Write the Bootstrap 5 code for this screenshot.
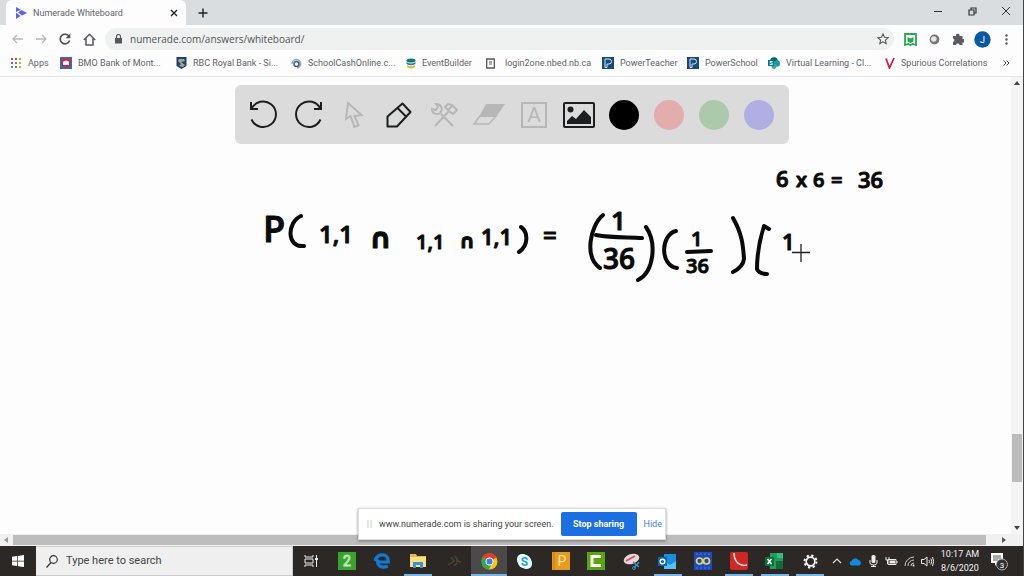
<!DOCTYPE html>
<html lang="en">
<head>
<meta charset="utf-8">
<meta name="viewport" content="width=device-width, initial-scale=1">
<title>Numerade Whiteboard</title>
<link rel="stylesheet" href="https://cdn.jsdelivr.net/npm/bootstrap@5.3.0/dist/css/bootstrap.min.css">
<style>
  body { font-family: Roboto, "Open Sans", sans-serif; font-size: 9px; line-height: 12px; background: #fdfdfd; color: #5f6368; }
  button { font: inherit; color: inherit; background: none; border: 0; padding: 0; }
  button, a { display: inline-flex; align-items: center; justify-content: center; flex-shrink: 0; }
  svg { display: block; flex-shrink: 0; }
  .window-edge { border-right: 1px solid #444; }

  .tab-strip { height: 25px; background: #dadde0; padding-left: 6px; }
  .browser-tab { width: 180px; background: #fdfdfd; border-radius: 6px 6px 0 0; padding: 0 8px 0 9px; gap: 6px; }
  .window-buttons button { width: 34px; height: 22px; color: #333; }

  .address-row { height: 28px; padding: 0 5px; }
  .address-row .nav-btn { width: 24px; height: 24px; }
  .omnibox { height: 22px; border-radius: 11px; background: #eff1f1; margin-left: 4px; padding: 0 5px 0 10px; gap: 8px; }
  .omnibox input { border: 0; background: none; outline: 0; padding: 0; font-family: "Open Sans", sans-serif; font-size: 10px; line-height: 16px; color: #4f5357; min-width: 0; }

  .bookmarks { height: 24px; border-bottom: 1px solid #e4e5e6; padding: 0 13px 3px 10px; }
  .bookmark-grid { display: grid; grid-template-columns: 50px 116px 115px 115px 80px 116px 85px 81px 117px 110px; }
  .bookmark-grid a { justify-content: flex-start; gap: 6px; color: #5f6368; text-decoration: none; white-space: nowrap; }

  .whiteboard { background: #fdfdfd; }
  .ink-layer { width: 100%; }
  .ink-layer text { font-family: "Open Sans", sans-serif; font-weight: 600; fill: #0a0a0a; stroke: #0a0a0a; stroke-width: 1; stroke-linejoin: round; }
  .ink-layer .cap-sign { font-family: "DejaVu Sans", sans-serif; font-weight: 700; }
  .tools-wrap { inset: 8px 0 auto 12px; }
  .tools { background: #dbdbdb; border-radius: 6px; height: 59px; padding: 0 7px; }
  .tools button { width: 45px; height: 45px; color: #1c1e1f; }
  .tools button:disabled { color: #b7b7b7; }
  .swatch { width: 30px; height: 30px; border-radius: 50%; }

  .v-scroll { width: 12px; background: #f4f4f4; color: #444; }
  .v-scroll .thumb { height: 48px; width: 10px; background: #bcbcbc; margin-bottom: 44px; }
  .h-scroll { height: 12px; background: #f1f1f1; color: #555; padding: 0 17px 0 4px; }
  .h-scroll .thumb { height: 10px; background: #bdbdbd; margin: 0 16px 0 4px; }

  .share-bar { left: 50%; bottom: 36px; width: 308px; height: 32px; margin-left: -154px; background: #fff; border: 1px solid #ddd; box-shadow: 0 1px 3px #0006; color: #444; padding: 0 7px 0 8px; gap: 7px; }
  .share-bar .stop { width: 76px; height: 24px; background: #1b6fe0; color: #fff; font-weight: 700; border-radius: 2px; }
  .share-bar a { color: #3b7fe0; text-decoration: none; }

  .taskbar-row { height: 30px; background: #2c2826; color: #f0f0f0; }
  .start { width: 36px; }
  .search-box { width: 257px; background: #efefef; color: #444; padding: 0 10px; gap: 8px; border: 1px solid #ccc; border-left: 0; }
  .search-box input { border: 0; background: none; outline: 0; padding: 0; font-size: 11px; color: #444; min-width: 0; }
  .search-box input::placeholder { color: #444; opacity: 1; }
  .apps button { flex: 1 1 0; }
  .apps .running { background: linear-gradient(#79b4e2, #79b4e2) bottom / 28px 2px no-repeat; }
  .apps .current { background-color: #4b4a49; background-size: 100% 2px; }
  .tray { padding-right: 9px; }
  .tray button { width: 18px; }
  .tray .clock { width: 48px; line-height: 14px; text-align: center; color: #f2f2f2; }
  .tray .notice { width: 30px; }
</style>
</head>
<body class="window-edge vh-100 d-flex flex-column overflow-hidden">

<header class="flex-shrink-0">
  <div class="tab-strip d-flex">
    <div class="browser-tab d-flex align-items-center">
      <svg width="12" height="12" viewBox="0 0 12 12" fill="#5b62ef"><path d="M1 0l5 2.800L1 5zM6.500 3L12 6 7 8.500 3 5.500zM1 5.500L5.500 9 1 12z"/></svg>
      <span class="flex-grow-1 text-nowrap">Numerade Whiteboard</span>
      <button type="button" aria-label="Close tab"><svg width="8" height="8" viewBox="0 0 8 8" stroke="#222" stroke-width="1.400"><path d="M1 1l6 6M7 1L1 7"/></svg></button>
    </div>
    <button type="button" class="ms-2 px-1" aria-label="New tab"><svg width="10" height="10" viewBox="0 0 10 10" stroke="#222" stroke-width="1.400"><path d="M5 .5v9M.5 5h9"/></svg></button>
    <div class="window-buttons ms-auto d-flex">
      <button type="button" aria-label="Minimize"><svg width="8" height="8" viewBox="0 0 8 8" stroke="currentColor"><path d="M0 4.500h8"/></svg></button>
      <button type="button" aria-label="Restore"><svg width="9" height="9" viewBox="0 0 9 9" fill="none" stroke="currentColor" stroke-width="1.200"><path d="M1 3h5v5H1zM3 3V1h5v5H6"/></svg></button>
      <button type="button" aria-label="Close"><svg width="8" height="8" viewBox="0 0 8 8" stroke="currentColor"><path d="M0 0l8 8M8 0L0 8"/></svg></button>
    </div>
  </div>

  <div class="address-row d-flex align-items-center">
    <button type="button" class="nav-btn" aria-label="Back"><svg width="11" height="10" viewBox="0 0 11 10" fill="none" stroke="#b6b8ba" stroke-width="1.300"><path d="M11 5H1M5 1L1 5l4 4"/></svg></button>
    <button type="button" class="nav-btn" aria-label="Forward"><svg width="11" height="10" viewBox="0 0 11 10" fill="none" stroke="#b6b8ba" stroke-width="1.300"><path d="M0 5h10M6 1l4 4-4 4"/></svg></button>
    <button type="button" class="nav-btn" aria-label="Reload"><svg width="12" height="12" viewBox="0 0 12 12" fill="none" stroke="#4d5053" stroke-width="1.600"><path d="M10.300 3.800A4.800 4.800 0 1 0 10.600 7.500"/><path d="M11.300.6v4.600H6.700z" fill="#4d5053" stroke="none"/></svg></button>
    <button type="button" class="nav-btn" aria-label="Home"><svg width="13" height="13" viewBox="0 0 13 13" fill="none" stroke="#55585b" stroke-width="1.500"><path d="M.8 7L6.500 1.300 12.200 7M3 5.500V12h7V5.500"/></svg></button>
    <div class="omnibox d-flex align-items-center flex-grow-1">
      <svg width="7" height="10" viewBox="0 0 7 10"><path d="M0 4h7v5.500H0z" fill="#55585b"/><path d="M1.500 4V2.500a2 2 0 0 1 4 0V4" fill="none" stroke="#55585b" stroke-width="1.200"/></svg>
      <input class="flex-grow-1" type="text" aria-label="Address" value="numerade.com/answers/whiteboard/">
      <button type="button" aria-label="Bookmark this page"><svg width="12" height="12" viewBox="0 0 12 12" fill="none" stroke="#55585b" stroke-width="1.100"><path d="M6 1l1.500 3.300 3.600.4-2.700 2.400.8 3.500L6 8.800l-3.200 1.800.8-3.500L.9 4.700l3.600-.4z"/></svg></button>
    </div>
    <button type="button" class="nav-btn ms-1" aria-label="Learning extension"><svg width="13" height="13" viewBox="0 0 13 13"><path d="M1 1h11v11L9 11l-2.500 1L4 11l-3 1z" fill="#fff" stroke="#24a952" stroke-width="1.800"/><path d="M3.500 4l3 1.500 3-1.500v4.500L6.500 10l-3-1.500z" fill="#24a952"/></svg></button>
    <button type="button" class="nav-btn" aria-label="Capture extension"><svg width="11" height="11" viewBox="0 0 11 11"><circle cx="5.500" cy="5.500" r="4.900" fill="#777"/><circle cx="4.800" cy="5" r="2.800" fill="#e6e6e6"/></svg></button>
    <button type="button" class="nav-btn" aria-label="Extensions"><svg width="12" height="12" viewBox="0 0 12 12" fill="#5a5d60"><path d="M1 3h3a1.800 1.800 0 1 1 3.500 0h3v3a1.800 1.800 0 1 1 0 3.500V12H7.500a1.800 1.800 0 0 0-3.500 0H1V9a1.800 1.800 0 0 0 0-3.500z"/></svg></button>
    <button type="button" class="nav-btn" aria-label="Profile"><svg width="17" height="17" viewBox="0 0 17 17"><circle cx="8.500" cy="8.500" r="8.200" fill="#0b57a0"/><text x="8.500" y="11.500" text-anchor="middle" font-size="9" fill="#fff">J</text></svg></button>
    <button type="button" class="nav-btn" aria-label="Menu"><svg width="3" height="11" viewBox="0 0 3 11" fill="#55585b"><circle cx="1.500" cy="1.500" r="1.200"/><circle cx="1.500" cy="5.500" r="1.200"/><circle cx="1.500" cy="9.500" r="1.200"/></svg></button>
  </div>

  <nav class="bookmarks d-flex align-items-center justify-content-between" aria-label="Bookmarks">
    <div class="bookmark-grid">
      <a href="#"><svg width="12" height="12" viewBox="0 0 12 12"><path d="M1 1h2v2H1zM5 1h2v2H5zM1 5h2v2H1z" fill="#e0443a"/><path d="M9 1h2v2H9zM9 5h2v2H9z" fill="#e8a020"/><path d="M5 5h2v2H5z" fill="#4285f4"/><path d="M1 9h2v2H1zM5 9h2v2H5z" fill="#34a853"/><path d="M9 9h2v2H9z" fill="#e8a020"/></svg>Apps</a>
      <a href="#"><svg width="12" height="12" viewBox="0 0 12 12"><path d="M0 0h12v12H0z" fill="#1c79b8"/><path d="M1.500 1.500h9v7.500L6 11 1.500 9z" fill="#e31c3b"/><path d="M3 4.500l3-1 3 1v1L8.500 6l.5.500V8H3z" fill="#fff"/></svg>BMO Bank of Mont...</a>
      <a href="#"><svg width="11" height="12" viewBox="0 0 11 12"><path d="M.5 0h10v9L5.500 12l-5-3z" fill="#1d3e8e"/><path d="M3 2h5l1 2-4 1 4 3-2 2-4-1 2-2-3-3z" fill="#a9b257"/></svg>RBC Royal Bank - Si...</a>
      <a href="#"><svg width="11" height="11" viewBox="0 0 11 11" fill="none" stroke-width="1.500"><path d="M1 6a4.300 4.300 0 1 1 5 4" stroke="#98a4b1"/><circle cx="5.500" cy="6" r="2.500" stroke="#3c5f92"/></svg>SchoolCashOnline.c...</a>
      <a href="#"><svg width="10" height="11" viewBox="0 0 10 11"><ellipse cx="5" cy="2.500" rx="4.500" ry="2" fill="#13796f"/><path d="M.5 4q4.500 3 9 0v2q-4.500 2.500-9 0z" fill="#207fc1"/><path d="M1 7q4 2.500 8 0v2q-4 3-8 0z" fill="#e9ba27"/></svg>EventBuilder</a>
      <a href="#"><svg class="me-1" width="9" height="11" viewBox="0 0 9 11" fill="none" stroke="#55585b"><path d="M.7 1h7.600v9H.7z" stroke-width="1.300"/><path d="M3 4h3M3 6h3"/></svg>login2one.nbed.nb.ca</a>
      <a href="#"><svg width="12" height="12" viewBox="0 0 12 12"><path d="M0 0h12v12H0z" fill="#154a7d"/><path d="M3 10.500V2h4a2.500 2.500 0 0 1 0 5H5v3.500z" fill="none" stroke="#d7e7f4"/></svg>PowerTeacher</a>
      <a href="#"><svg width="12" height="12" viewBox="0 0 12 12"><path d="M0 0h12v12H0z" fill="#154a7d"/><path d="M3 10.500V2h4a2.500 2.500 0 0 1 0 5H5v3.500z" fill="none" stroke="#d7e7f4"/></svg>PowerSchool</a>
      <a href="#"><svg width="12" height="12" viewBox="0 0 12 12"><circle cx="6" cy="4" r="3.800" fill="#03696c"/><circle cx="8.800" cy="6.500" r="3.200" fill="#1a9ba1"/><circle cx="6" cy="9.500" r="2.400" fill="#37a6aa"/><path d="M0 3h6v6H0z" fill="#03777b"/><text x="3" y="8" text-anchor="middle" font-size="6" font-weight="700" fill="#fff">S</text></svg>Virtual Learning - Cl...</a>
      <a href="#"><svg width="10" height="12" viewBox="0 0 10 12"><path d="M1 1.500l3.500 9.500L9 1" fill="none" stroke="#d0203c" stroke-width="1.800"/></svg>Spurious Correlations</a>
    </div>
    <button type="button" aria-label="More bookmarks"><svg width="7" height="6" viewBox="0 0 7 6" fill="none" stroke="#444"><path d="M.5.5L3 3 .5 5.500M3.500.5L6 3 3.500 5.500"/></svg></button>
  </nav>
</header>

<main class="flex-grow-1 d-flex overflow-hidden">
  <section class="whiteboard position-relative flex-grow-1 overflow-hidden">
    <svg class="ink-layer" viewBox="0 77 1011 457" role="img" aria-label="Probability worked out by hand">
      <g font-size="20">
        <text x="776" y="187" font-size="22">6</text><text x="796" y="187">x</text><text x="813" y="187">6</text><text x="831" y="187">=</text><text x="858" y="188" font-size="22">36</text>
        <text x="263" y="242" font-size="36">P</text>
        <text x="319" y="243" font-size="24">1,1</text>
        <text x="369" y="248" font-size="28" class="cap-sign">∩</text>
        <text x="416" y="249">1,1</text>
        <text x="459" y="248" class="cap-sign">∩</text>
        <text x="481" y="245" font-size="22">1,1</text>
        <text x="543" y="244" font-size="24">=</text>
        <text x="611" y="230" font-size="26">1</text><text x="603" y="269" font-size="28">36</text>
        <text x="691" y="246">1</text><text x="686" y="273">36</text>
        <text x="782" y="250" font-size="22">1</text>
      </g>
      <g fill="none" stroke="#0a0a0a" stroke-width="4" stroke-linecap="round" stroke-linejoin="round">
        <path d="M301 216C287 222 286 248 304 246M521 227C528 232 529 245 519 252"/>
        <path d="M603 215C590 226 584 257 600 268M596 235C612 238 627 237 642 238M646 227C657 243 654 272 638 280"/>
        <path d="M676 231C660 235 660 266 677 268M687 252L711 251M733 218C742 234 743 244 744 259Q743 267 733 272"/>
        <path d="M769 229L764 226Q757 248 757 269Q759 274 767 274"/>
      </g>
      <path d="M792 252.500h18M801 244v18" stroke="#222" stroke-width="1.300"/>
    </svg>
    <div class="tools-wrap position-absolute d-flex justify-content-center">
      <div class="tools d-flex align-items-center" role="toolbar" aria-label="Drawing tools">
        <button type="button" aria-label="Undo"><svg width="30" height="30" viewBox="0 0 30 30" fill="none" stroke="currentColor" stroke-width="2"><path d="M2 2v7h7M2.500 9A12.800 12.800 0 1 1 2.500 19.500"/></svg></button>
        <button type="button" aria-label="Redo"><svg width="30" height="30" viewBox="0 0 30 30" fill="none" stroke="currentColor" stroke-width="2"><path d="M27 2v7h-7M26.500 9A12.800 12.800 0 1 0 26.500 19.500"/></svg></button>
        <button type="button" aria-label="Select" disabled><svg width="20" height="28" viewBox="0 0 20 28" fill="none" stroke="currentColor" stroke-width="2"><path d="M4 2L2 18l4.500-3 4 11 4-2-4-9 7-1z"/></svg></button>
        <button type="button" aria-label="Pen"><svg width="26" height="26" viewBox="0 0 26 26" fill="none" stroke="currentColor" stroke-width="2" stroke-linejoin="round"><path d="M1.500 24.500v-10L16.500 1.500l8 8.500-13.500 14.500zM11.500 6l9 9"/></svg></button>
        <button type="button" aria-label="Tools" disabled><svg width="28" height="26" viewBox="0 0 28 26" fill="none" stroke="currentColor" stroke-width="2"><path d="M5 24L20 8M11 12l12 12M6 2l2 3-2 3-4-1c0 5 5 6 8 4 3-3 2-9-4-9zM15 5l3-3 4 1 5 5-4 4-3-2zM18 8l4-4"/></svg></button>
        <button type="button" aria-label="Eraser" disabled><svg width="34" height="24" viewBox="0 0 34 24"><path d="M14 1h19L24 14H7z" fill="currentColor"/><path d="M8 13h16l-7 8H2z" fill="none" stroke="currentColor" stroke-width="1.600"/></svg></button>
        <button type="button" aria-label="Text" disabled><svg width="30" height="30" viewBox="0 0 30 30"><path d="M3 3h24v24H3z" fill="none" stroke="currentColor" stroke-width="2"/><text x="15" y="22" text-anchor="middle" font-size="21" fill="currentColor">A</text></svg></button>
        <button type="button" aria-label="Image"><svg width="32" height="26" viewBox="0 0 32 26"><rect x="1" y="1" width="30" height="24" rx="1" fill="none" stroke="currentColor" stroke-width="2"/><circle cx="7.500" cy="7.500" r="3" fill="currentColor"/><path d="M4 22v-3l5-5 4 3 8-9 7 7v7z" fill="currentColor"/></svg></button>
        <button type="button" aria-label="Black"><span class="swatch" style="background:#000"></span></button>
        <button type="button" aria-label="Red"><span class="swatch" style="background:#e3adab"></span></button>
        <button type="button" aria-label="Green"><span class="swatch" style="background:#abcaab"></span></button>
        <button type="button" aria-label="Blue"><span class="swatch" style="background:#b0afe3"></span></button>
      </div>
    </div>
  </section>
  <div class="v-scroll flex-shrink-0 d-flex flex-column align-items-center py-1">
    <svg width="6" height="4" viewBox="0 0 6 4" fill="currentColor"><path d="M0 4l3-4 3 4z"/></svg>
    <div class="thumb mt-auto"></div>
    <svg width="6" height="4" viewBox="0 0 6 4" fill="currentColor"><path d="M0 0l3 4 3-4z"/></svg>
  </div>
</main>
<div class="h-scroll flex-shrink-0 d-flex align-items-center">
  <svg width="5" height="6" viewBox="0 0 5 6" fill="#999"><path d="M4 0v6L0 3z"/></svg>
  <div class="thumb flex-grow-1"></div>
  <svg width="4" height="6" viewBox="0 0 4 6" fill="currentColor"><path d="M0 0v6l4-3z"/></svg>
</div>

<div class="share-bar position-absolute d-flex align-items-center">
  <svg width="5" height="8" viewBox="0 0 5 8" stroke="#ccc"><path d="M1 0v8M4 0v8"/></svg>
  <span class="flex-grow-1 text-nowrap">www.numerade.com is sharing your screen.</span>
  <button type="button" class="stop">Stop sharing</button>
  <a href="#">Hide</a>
</div>

<footer class="taskbar-row flex-shrink-0 d-flex">
  <button type="button" class="start" aria-label="Start"><svg width="12" height="12" viewBox="0 0 12 12" fill="#fff"><path d="M0 1.700l5.300-.7v4.700H0zM6 .9L12 0v5.700H6zM0 6.400h5.300v4.700L0 10.300zM6 6.400h6V12l-6-.8z"/></svg></button>
  <label class="search-box d-flex align-items-center">
    <svg width="12" height="13" viewBox="0 0 12 13" fill="none" stroke="#333" stroke-width="1.200"><circle cx="7.500" cy="4.500" r="3.800"/><path d="M5 7.500L.5 12.500"/></svg>
    <input class="flex-grow-1" type="text" placeholder="Type here to search" aria-label="Search">
  </label>
  <div class="apps d-flex flex-grow-1">
    <button type="button" aria-label="Task view"><svg width="14" height="12" viewBox="0 0 14 12" fill="none" stroke="#eee"><path d="M1 0v2h8V0M1 4h8v4H1zM1 12v-2h8v2M12.500 0v12"/><path d="M11 3h3v2h-3z" fill="#eee" stroke="none"/></svg></button>
    <button type="button" aria-label="Smart 2"><svg width="18" height="18" viewBox="0 0 18 18"><path d="M0 0h18v18H0z" fill="#39a32d"/><text x="9" y="14" text-anchor="middle" font-size="14" fill="none" stroke="#c8ecc0">2</text></svg></button>
    <button type="button" aria-label="Edge"><svg width="16" height="16" viewBox="0 0 16 16" fill="none" stroke="#0f7bd3" stroke-width="3.200"><path d="M4 9h10.300C14.500 4.500 12 1.800 8.500 1.800 5 1.800 2 4 1 8M4.500 6.500c-3 6 3.500 9.500 9.300 6.500"/></svg></button>
    <button type="button" class="running" aria-label="File Explorer"><svg width="18" height="16" viewBox="0 0 18 16"><path d="M1 1h6l1 2h9v11H1z" fill="#e9b84a"/><path d="M1 4h16v10H1z" fill="#fbdd84"/><path d="M4 15V9h10v6h-3v-3H7v3z" fill="#3694d9"/></svg></button>
    <button type="button" aria-label="Recycle tool"><svg width="16" height="14" viewBox="0 0 16 14" fill="none" stroke-width="1.500"><path d="M5 3l3 4-6 4M9 2l3 5" stroke="#3d4a32"/><path d="M10 7l5 1M8 12l3-3" stroke="#613b36"/></svg></button>
    <button type="button" class="running current" aria-label="Chrome"><svg width="17" height="17" viewBox="0 0 17 17"><circle cx="8.500" cy="8.500" r="8" fill="#fbc116"/><path d="M8.500 8.500L1.500 4.500a8 8 0 0 1 14 0z" fill="#e33b2e"/><path d="M8.500 8.500L1.500 4.500a8 8 0 0 0 6 12l3-5z" fill="#2da94f"/><circle cx="8.500" cy="8.500" r="3.900" fill="#fff"/><circle cx="8.500" cy="8.500" r="3" fill="#3f7de8"/></svg></button>
    <button type="button" aria-label="Skype"><svg width="17" height="17" viewBox="0 0 17 17"><rect x="1" y="1" width="11" height="11" rx="5" fill="#e9f8fe"/><rect x="5" y="5" width="11" height="11" rx="5" fill="#e9f8fe"/><circle cx="8.500" cy="8.500" r="6.800" fill="#e9f8fe"/><text x="8.500" y="13" text-anchor="middle" font-size="12" font-weight="700" fill="#1aa5dc">S</text></svg></button>
    <button type="button" aria-label="Planner"><svg width="18" height="18" viewBox="0 0 18 18"><path d="M0 0h18v18H0z" fill="#e89a1c"/><path d="M2 0v18" stroke="#c97a10"/><text x="10" y="14" text-anchor="middle" font-size="14" fill="#fce3a4">P</text></svg></button>
    <button type="button" aria-label="Camtasia"><svg width="18" height="18" viewBox="0 0 18 18"><path d="M0 0h18v18H0z" fill="#56a70e"/><path d="M14 4.500H5v9h9" fill="none" stroke="#fff" stroke-width="3"/></svg></button>
    <button type="button" aria-label="Snipping Tool"><svg width="18" height="17" viewBox="0 0 18 17"><ellipse cx="8.500" cy="6" rx="8" ry="5" fill="#ead6d6" transform="rotate(-18 8.500 6)"/><path d="M3 8l9-5" stroke="#cc5760" stroke-width="2"/><path d="M10 9l6 5M16 9l-5 6" stroke="#4390bd" stroke-width="1.500"/><circle cx="11" cy="15" r="1.500" fill="none" stroke="#3786b5"/></svg></button>
    <button type="button" class="running" aria-label="Outlook"><svg width="19" height="17" viewBox="0 0 19 17"><path d="M6 1h12v15H6z" fill="#1990df"/><path d="M6 8l6 4 6-4v8H6z" fill="#56c0f2"/><path d="M0 4h9v9H0z" fill="#0865b8"/><circle cx="4.500" cy="8.500" r="2.300" fill="none" stroke="#fff" stroke-width="1.400"/></svg></button>
    <button type="button" aria-label="Infinity"><svg width="18" height="18" viewBox="0 0 18 18"><path d="M0 0h18v18H0z" fill="#1b4ac4"/><path d="M2 2h14M2 16h14" stroke="#527ddb" stroke-dasharray="2 2"/><g fill="none" stroke="#e6d851" stroke-width="1.700"><circle cx="5.500" cy="9" r="3"/><circle cx="12.500" cy="9" r="3"/></g></svg></button>
    <button type="button" class="running" aria-label="PDF reader"><svg width="18" height="18" viewBox="0 0 18 18"><rect width="18" height="18" rx="2" fill="#ce2726"/><path d="M4 1c0 8 5 14 13 12" fill="none" stroke="#f8e7e5" stroke-width="1.500"/></svg></button>
    <button type="button" class="running" aria-label="Excel"><svg width="19" height="16" viewBox="0 0 19 16"><path d="M5 0h13v16H5z" fill="#1f9d5b"/><path d="M12 0h6v5h-6z" fill="#36bd78"/><path d="M11 8h7v8h-7z" fill="#166a3c"/><path d="M0 4h9v9H0z" fill="#0e703b"/><path d="M2.500 6l4 5M6.500 6l-4 5" stroke="#fff" stroke-width="1.400"/></svg></button>
    <button type="button" class="running" aria-label="Settings"><svg width="15" height="15" viewBox="0 0 15 15" fill="none" stroke="#fff"><circle cx="7.500" cy="7.500" r="4.300" stroke-width="1.700"/><circle cx="7.500" cy="7.500" r="6" stroke-width="2" stroke-dasharray="2.300 2.412"/></svg></button>
  </div>
  <div class="tray d-flex align-items-stretch">
    <button type="button" aria-label="Show hidden icons"><svg width="10" height="6" viewBox="0 0 10 6" fill="none" stroke="#ddd" stroke-width="1.200"><path d="M1 5l4-4 4 4"/></svg></button>
    <button type="button" aria-label="OneDrive"><svg width="13" height="9" viewBox="0 0 13 9"><path d="M2.500 8.500a2.300 2.300 0 0 1 0-4.500 4 4 0 0 1 7-1 3 3 0 0 1 1 5.500z" fill="#1489dc"/></svg></button>
    <button type="button" aria-label="Microphone"><svg width="9" height="12" viewBox="0 0 9 12"><rect x="2.500" width="4" height="8" rx="1.500" fill="#eee"/><path d="M1 5v3q0 2 3.500 2T8 8V5M4.500 10v1.500M2 11.500h5" fill="none" stroke="#eee"/></svg></button>
    <button type="button" aria-label="Battery"><svg width="13" height="10" viewBox="0 0 13 10" fill="none" stroke="#eee"><path d="M3 3.500h8v5H3zM12 5v2M1 1v3h3V1M2.500 4v4"/><path d="M4.500 4.500H10v3H4.500z" fill="#eee" stroke="none"/></svg></button>
    <button type="button" aria-label="Network"><svg width="11" height="11" viewBox="0 0 11 11" fill="none" stroke="#ccc"><path d="M1 10A9 9 0 0 1 10 1M4 10a6 6 0 0 1 6-6M7 10a3 3 0 0 1 3-3"/><circle cx="9.500" cy="9.500" r="1" fill="#fff" stroke="none"/></svg></button>
    <button type="button" aria-label="Volume"><svg width="13" height="11" viewBox="0 0 13 11" fill="none" stroke="#eee"><path d="M.5 3.500H3L6 1v9L3 7.500H.5zM8 4q1 1.500 0 3M9.800 2.500q2 3 0 6M11.500 1q2.500 4.500 0 9"/></svg></button>
    <button type="button" class="clock">10:17 AM<br>8/6/2020</button>
    <button type="button" class="notice" aria-label="3 notifications"><svg width="18" height="19" viewBox="0 0 18 19"><path d="M1 1h12v10H7l-2 3v-3H1z" fill="#fff"/><path d="M3 4h8M3 6h8M3 8h5" stroke="#555"/><circle cx="12" cy="12.500" r="5.500" fill="#343231" stroke="#aaa"/><text x="12" y="15.500" text-anchor="middle" font-size="8" fill="#fff">3</text></svg></button>
  </div>
</footer>

<script src="https://cdn.jsdelivr.net/npm/bootstrap@5.3.0/dist/js/bootstrap.bundle.min.js"></script>
</body>
</html>
